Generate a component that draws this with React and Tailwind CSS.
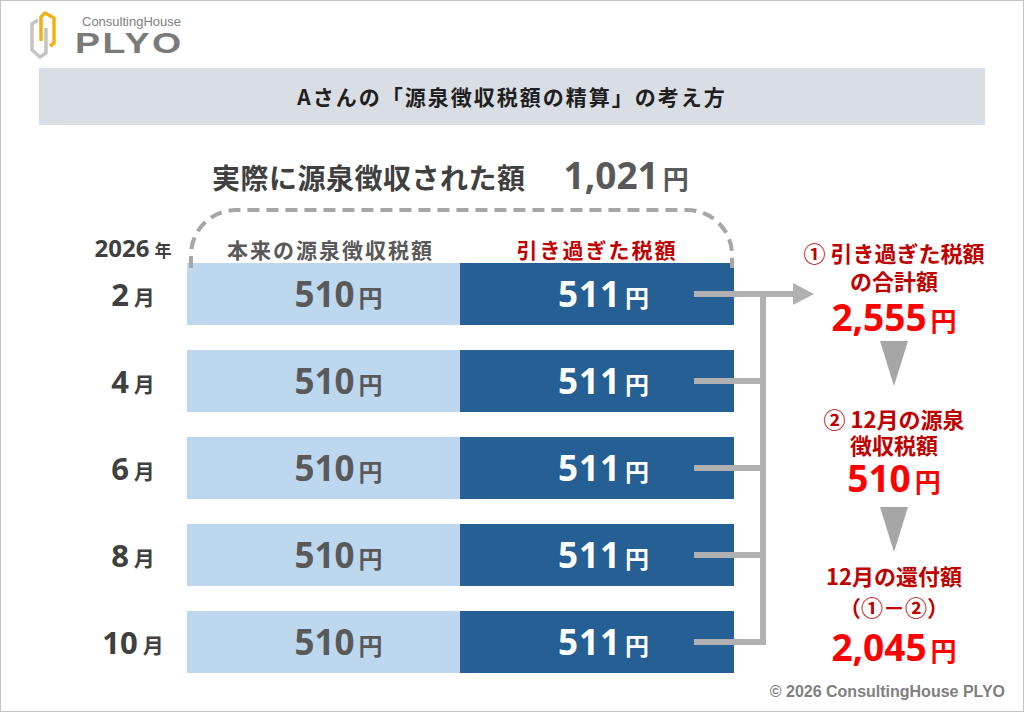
import React from 'react';

const jp = "font-['Noto_Sans_CJK_JP','Noto_Sans',sans-serif]";
const num = "font-['Open_Sans','Noto_Sans_CJK_JP',sans-serif]";

const months = ['2', '4', '6', '8', '10'];
const rowCenters = [31, 118, 205, 292, 379];

const Logo = () => (
    <div className="flex items-start pt-[9px] pl-[27px] h-[67px]">
        <svg width="30" height="50" viewBox="0 0 30 50" className="shrink-0">
            <polyline points="10,10 4,14 4,40 12,47 18,43 18,18" fill="none" stroke="#c4c4c4" strokeWidth="3.5" strokeLinejoin="round" />
            <polyline points="13,31 13,7 17,3 26,8 26,33 22,36" fill="none" stroke="#f2b21c" strokeWidth="3.5" strokeLinejoin="round" />
        </svg>
        <div className="ml-[17px] flex flex-col">
            <span className="text-[13px] leading-[14px] text-[#808080] font-['Liberation_Sans',sans-serif] ml-[7px] mt-[5px]">ConsultingHouse</span>
            <span className="inline-block origin-left scale-x-125 text-[30px] leading-[28px] font-bold tracking-[2px] text-[#7a7a7a] font-['Liberation_Sans',sans-serif]">PLYO</span>
        </div>
    </div>
);

const Triangle = () => (
    <svg width="28" height="45" viewBox="0 0 28 45" className="mx-auto block">
        <polygon points="0,0 28,0 14,45" fill="#a6a6a6" />
    </svg>
);

const Yen = ({ children, className, yen = 'text-[24px]' }) => (
    <span className={`${num} font-bold ${className}`}>
        {children}
        <span className={`${jp} ${yen} ml-[4px]`}>円</span>
    </span>
);

export default function App() {
    return (
        <div className={`${jp} w-[1024px] h-[712px] bg-white border border-[#c4c4c4] overflow-hidden`}>
            <Logo />

            <div className="mx-[38px] h-[57px] bg-[#d9dde4] flex items-center justify-center">
                <h1 className="text-[21px] font-bold tracking-[2px] text-[#1f1f1f]">Aさんの「源泉徴収税額の精算」の考え方</h1>
            </div>

            <div className="mt-[33px] pl-[211px] flex items-baseline h-[34px]">
                <span className="text-[28px] leading-[34px] font-bold text-[#404040] tracking-[0.5px]">実際に源泉徴収された額</span>
                <span className={`${num} ml-[38px] text-[37px] leading-[34px] font-bold text-[#595959]`}>1,021</span>
                <span className="ml-[4px] text-[26px] font-bold text-[#595959]">円</span>
            </div>

            <div className="mt-[18px] relative flex">
                <div className="w-[733px] flex flex-col">
                    <div className="relative h-[53px] flex items-end pb-[3px]">
                        <svg width="550" height="60" viewBox="0 0 550 60" className="absolute left-[188px] top-[-2px]">
                            <path d="M 2 60 L 2 47 A 45 45 0 0 1 47 2 L 498 2 A 45 45 0 0 1 543 47 L 543 60" fill="none" stroke="#a6a6a6" strokeWidth="4" strokeDasharray="12 7" />
                        </svg>
                        <div className="w-[186px] pl-[78px] flex justify-center items-baseline text-[#404040] font-bold">
                            <span className={`${num} text-[24px] leading-none`}>2026</span>
                            <span className="text-[17px] leading-none ml-[5px]">年</span>
                        </div>
                        <div className="w-[273px] pl-[14px] text-center text-[21px] leading-none font-bold tracking-[2px] text-[#595959] relative">本来の源泉徴収税額</div>
                        <div className="w-[274px] text-center text-[21px] leading-none font-bold tracking-[2px] text-[#c00000] relative">引き過ぎた税額</div>
                    </div>

                    <div className="flex flex-col gap-[25px]">
                        {months.map((m) => (
                            <div key={m} className="h-[62px] flex">
                                <div className="w-[186px] pl-[78px] flex items-center justify-center text-[#404040] font-bold">
                                    <span className={`${num} text-[31px]`}>{m}</span>
                                    <span className="text-[21px] ml-[5px] mt-[6px]">月</span>
                                </div>
                                <div className="w-[273px] bg-[#bdd7ee] flex items-center justify-center pl-[30px]">
                                    <Yen className="text-[35px] text-[#595959]">510</Yen>
                                </div>
                                <div className="w-[274px] bg-[#265f93] flex items-center justify-center pl-[14px]">
                                    <Yen className="text-[35px] text-white tracking-[1px]">511</Yen>
                                </div>
                            </div>
                        ))}
                    </div>
                </div>

                <svg width="130" height="400" viewBox="0 0 130 400" className="absolute left-[690px] top-[53px]">
                    {rowCenters.map((y, i) => (
                        <line key={y} x1="3" y1={y} x2={i === 0 ? 106 : 75} y2={y} stroke="#b0b0b0" strokeWidth="6" />
                    ))}
                    <line x1="72" y1="28" x2="72" y2="382" stroke="#b0b0b0" strokeWidth="6" />
                    <polygon points="102,20 123,31 102,42" fill="#b0b0b0" />
                </svg>

                <div className="ml-[50px] w-[220px] pt-[28px] flex flex-col items-center text-center font-bold">
                    <div className="text-[22px] leading-[28px] text-[#c00000]">① 引き過ぎた税額<br />の合計額</div>
                    <Yen className="mt-[4px] text-[37px] leading-[38px] text-[#ff0000]" yen="text-[26px]">2,555</Yen>
                    <div className="mt-[2px]"><Triangle /></div>
                    <div className="mt-[19px] text-[22px] leading-[26px] text-[#c00000]">② 12月の源泉<br />徴収税額</div>
                    <Yen className="mt-[2px] text-[37px] leading-[38px] text-[#ff0000]" yen="text-[26px]">510</Yen>
                    <div className="mt-[7px]"><Triangle /></div>
                    <div className="mt-[8px] text-[22px] leading-[31px] text-[#c00000]">12月の還付額<br />（①－②）</div>
                    <Yen className="mt-[6px] text-[37px] leading-[38px] text-[#ff0000]" yen="text-[26px]">2,045</Yen>
                </div>
            </div>

            <div className="mt-[10px] pr-[18px] flex justify-end">
                <span className="text-[16px] leading-[17px] font-bold text-[#808080] font-['Liberation_Sans',sans-serif]">© 2026 ConsultingHouse PLYO</span>
            </div>
        </div>
    );
}
